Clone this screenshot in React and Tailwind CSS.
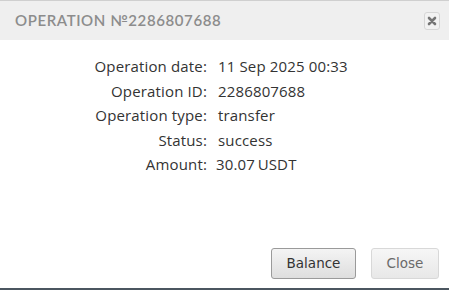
export default function App() {
  const rows = [
    ["Operation date:", "11 Sep 2025 00:33", ""],
    ["Operation ID:", "2286807688", ""],
    ["Operation type:", "transfer", ""],
    ["Status:", "success", ""],
    ["Amount:", "30.07\u2009USDT", "-ml-[2px]"],
  ];
  return (
    <div className="w-[449px] h-[290px] bg-white flex flex-col border-t border-t-[#cfcfcf] border-b-2 border-b-[#4b5660] overflow-hidden">
      <div className="h-[39px] bg-[#efefef] flex items-center justify-between pl-[15px] pr-[9px] shrink-0">
        <div className="text-[15px] tracking-[0.6px] text-[#8c8c8c] font-semibold leading-none" style={{ fontFamily: '"Lato", "Liberation Sans", sans-serif' }}>
          OPERATION №2286807688
        </div>
        <div className="w-[16px] h-[18px] border border-[#d6d6d6] rounded-[3px] bg-[#f2f2f2] flex items-center justify-center mt-[1px]">
          <svg width="10" height="10" viewBox="0 0 10 10">
            <path d="M2 2 L8 8 M8 2 L2 8" stroke="#757575" strokeWidth="2.6" strokeLinecap="round" />
          </svg>
        </div>
      </div>
      <div className="flex-1 flex flex-col pt-[16px]" style={{ fontFamily: '"Open Sans", "Liberation Sans", sans-serif' }}>
        <div className="flex flex-col gap-[4.5px] text-[15px] tracking-[0.15px] text-[#333] leading-[20px]">
          {rows.map(([k, v, c]) => (
            <div key={k} className="flex">
              <div className="w-[207px] text-right">{k}</div>
              <div className={"pl-[11px] whitespace-pre " + c}>{v}</div>
            </div>
          ))}
        </div>
      </div>
      <div className="flex justify-end gap-[15px] pr-[10px] pb-[9px]" style={{ fontFamily: '"DejaVu Sans", Verdana, sans-serif' }}>
        <button className="w-[85px] h-[31px] rounded-[3px] border border-[#9a9a9a] bg-gradient-to-b from-[#f4f4f4] to-[#dedede] text-[13.5px] text-[#333]">
          Balance
        </button>
        <button className="w-[68px] h-[31px] rounded-[3px] border border-[#d8d8d8] bg-gradient-to-b from-[#f6f6f6] to-[#e8e8e8] text-[13.5px] text-[#6a6a6a]">
          Close
        </button>
      </div>
    </div>
  );
}
